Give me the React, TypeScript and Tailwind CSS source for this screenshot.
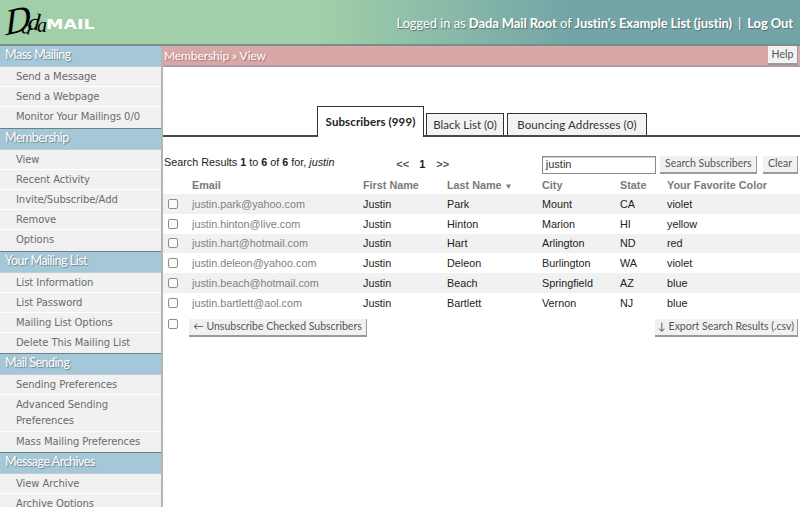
const sections = [
  { title: 'Mass Mailing', items: ['Send a Message', 'Send a Webpage', 'Monitor Your Mailings 0/0'] },
  { title: 'Membership', items: ['View', 'Recent Activity', 'Invite/Subscribe/Add', 'Remove', 'Options'] },
  { title: 'Your Mailing List', items: ['List Information', 'List Password', 'Mailing List Options', 'Delete This Mailing List'] },
  { title: 'Mail Sending', items: ['Sending Preferences', 'Advanced Sending Preferences', 'Mass Mailing Preferences'] },
  { title: 'Message Archives', items: ['View Archive', 'Archive Options'] },
];

const rows = [
  ['justin.park@yahoo.com', 'Justin', 'Park', 'Mount', 'CA', 'violet'],
  ['justin.hinton@live.com', 'Justin', 'Hinton', 'Marion', 'HI', 'yellow'],
  ['justin.hart@hotmail.com', 'Justin', 'Hart', 'Arlington', 'ND', 'red'],
  ['justin.deleon@yahoo.com', 'Justin', 'Deleon', 'Burlington', 'WA', 'violet'],
  ['justin.beach@hotmail.com', 'Justin', 'Beach', 'Springfield', 'AZ', 'blue'],
  ['justin.bartlett@aol.com', 'Justin', 'Bartlett', 'Vernon', 'NJ', 'blue'],
];

const uiFont = "font-['Liberation_Sans',Arial,sans-serif]";
const menuFont = "font-['DejaVu_Sans',Verdana,sans-serif]";
const softFont = "font-['Lato','Noto_Sans',sans-serif]";

const Checkbox = () => (
  <span className="block w-[10px] h-[10px] rounded-[2px] border border-[#8d8d8d] bg-[#fafafa]" />
);

const GreyButton = ({ children, className = '' }: { children: React.ReactNode; className?: string }) => (
  <span
    className={`${softFont} flex items-center justify-center h-[18px] bg-[#f1f1f1] border-b-2 border-r border-[#9a9a9a] text-[10.5px] text-[#555] whitespace-nowrap ${className}`}
  >
    {children}
  </span>
);

const Logo = () => (
  <div className="flex items-center h-full pl-[4px]">
    <div className="relative w-[42px] h-[44px] font-['Liberation_Serif',serif] italic text-black">
      <span className="absolute left-[1px] top-[2px] text-[36px] leading-none -rotate-[14deg] -skew-x-12">D</span>
      <span className="absolute left-[18px] top-[17px] text-[20px] leading-none rotate-12">a</span>
      <span className="absolute left-[24px] top-[10px] text-[24px] leading-none rotate-6">d</span>
      <span className="absolute left-[33px] top-[15px] text-[20px] leading-none">a</span>
    </div>
    <span className="font-['DejaVu_Sans',sans-serif] font-bold text-white text-[14px] scale-x-125 origin-left mt-[5px]">
      MAIL
    </span>
  </div>
);

const Sidebar = () => (
  <aside className="w-[163px] shrink-0 border-r-2 border-[#b5b5b5] bg-white overflow-hidden">
    {sections.map((section) => (
      <div key={section.title} className="border-b border-[#6f7f85] last:border-b-0">
        <div
          className={`${softFont} h-[21px] pb-[1px] flex items-center pl-[5px] bg-[#a5c8d9] border-b border-[#bccfd9] text-white text-[12.5px] tracking-[-0.5px] [text-shadow:1px_1px_1px_#6d7f88]`}
        >
          {section.title}
        </div>
        {section.items.map((item) => (
          <div
            key={item}
            className={`${menuFont} pl-[16px] pr-[8px] pt-[2px] pb-[1.2px] bg-[#f1f1f1] border-b border-white last:border-b-0 last:pb-[2.2px] text-[10px] leading-[16px] tracking-[-0.08px] text-[#6b6b6b]`}
          >
            {item}
          </div>
        ))}
      </div>
    ))}
  </aside>
);

const Tabs = () => (
  <div className="flex items-end h-[70px] border-b-2 border-[#4a4a4a] pl-[154px]">
    <div className={`${softFont} h-[31px] w-[107px] -mb-[2px] flex items-center justify-center bg-white border-[1.5px] border-b-0 border-[#333] text-[11.5px] font-bold tracking-[0.1px] text-[#222] whitespace-nowrap`}>
      Subscribers (999)
    </div>
    <div className={`${softFont} h-[22px] w-[78px] ml-[2px] flex items-center justify-center bg-[#f3f3f3] border border-b-0 border-[#333] text-[11.5px] text-[#333] whitespace-nowrap`}>
      Black List (0)
    </div>
    <div className={`${softFont} h-[22px] w-[140px] ml-[3px] flex items-center justify-center bg-[#f3f3f3] border border-b-0 border-[#333] text-[11.5px] tracking-[0.1px] text-[#333] whitespace-nowrap`}>
      Bouncing Addresses (0)
    </div>
  </div>
);

const SearchBar = () => (
  <div className={`${uiFont} flex items-center h-[20px] mt-[18px] pl-px pr-[2px] text-[10.8px] text-[#222]`}>
    <div className="w-[233px] -mt-[6px] whitespace-nowrap">
      Search Results <b>1</b> to <b>6</b> of <b>6</b> for, <i>justin</i>
    </div>
    <div className="flex items-center w-[146px] -mt-[2px] text-[11px] text-[#555]">
      <span className="w-[23px] font-bold">&lt;&lt;</span>
      <b className="w-[17px] text-[#222]">1</b>
      <span className="font-bold">&gt;&gt;</span>
    </div>
    <div className="w-[115px] h-[18px] pb-px flex items-center pl-[3px] bg-white border border-[#8a8a8a] text-[11px] text-[#333] shadow-[inset_0_1px_1px_#ccc]">
      justin
    </div>
    <GreyButton className="w-[97px] ml-[4px]">Search Subscribers</GreyButton>
    <GreyButton className="w-[35px] ml-[6px]">Clear</GreyButton>
  </div>
);

const ResultsTable = () => (
  <table className={`${uiFont} w-full table-fixed border-collapse text-[10.8px] text-[#222] -mt-[1px]`}>
    <colgroup>
      <col className="w-[29px]" />
      <col className="w-[171px]" />
      <col className="w-[84px]" />
      <col className="w-[95px]" />
      <col className="w-[78px]" />
      <col className="w-[47px]" />
      <col />
    </colgroup>
    <thead>
      <tr className="h-[20px] text-left text-[#7a7a7a] font-bold align-bottom">
        <th />
        <th className="font-bold pb-px">Email</th>
        <th className="font-bold pb-px">First Name</th>
        <th className="font-bold pb-px whitespace-nowrap">
          Last Name <span className="text-[8px] leading-none">▼</span>
        </th>
        <th className="font-bold pb-px">City</th>
        <th className="font-bold pb-px">State</th>
        <th className="font-bold pb-px">Your Favorite Color</th>
      </tr>
    </thead>
    <tbody>
      {rows.map((row, i) => (
        <tr key={row[0]} className={`h-[19.8px] ${i % 2 === 0 ? 'bg-[#f1f1f1]' : 'bg-white'}`}>
          <td className="pl-[5px]">
            <Checkbox />
          </td>
          {row.map((cell, j) => (
            <td key={j} className={j === 0 ? 'text-[#808080]' : ''}>
              {cell}
            </td>
          ))}
        </tr>
      ))}
    </tbody>
  </table>
);

export default function App() {
  return (
    <div className="w-[800px] h-[507px] overflow-hidden flex flex-col bg-white">
      <header className="h-[46px] shrink-0 flex items-center justify-between bg-[linear-gradient(90deg,#a0cfa8_40%,#72a4a8_72%)] border-b-2 border-[#79908a]">
        <Logo />
        <div className={`${softFont} pr-[7px] pt-[3px] text-[13px] text-white tracking-[-0.1px] [text-shadow:1px_1px_1px_#56706f]`}>
          Logged in as <b>Dada Mail Root</b> of <b>Justin's Example List (justin)</b>
          <span className="mx-[6px]">|</span>
          <b>Log Out</b>
        </div>
      </header>
      <div className="flex flex-1 min-h-0">
        <Sidebar />
        <main className="flex-1 min-w-0">
          <div className="h-[21px] flex items-center justify-between pl-[1px] pr-[2px] bg-[#d8a7a7] border-b-2 border-[#b09c9c]">
            <span className={`${softFont} text-white text-[12px] tracking-[-0.1px] [text-shadow:1px_1px_1px_#9c7474]`}>Membership » View</span>
            <GreyButton className="w-[30px] h-[19px] self-start">Help</GreyButton>
          </div>
          <Tabs />
          <SearchBar />
          <ResultsTable />
          <div className="flex items-start mt-[6px] pl-[5px] pr-[2px]">
            <Checkbox />
            <GreyButton className="w-[178px] ml-[11px]">← Unsubscribe Checked Subscribers</GreyButton>
            <GreyButton className="w-[143px] ml-auto">↓ Export Search Results (.csv)</GreyButton>
          </div>
        </main>
      </div>
    </div>
  );
}
